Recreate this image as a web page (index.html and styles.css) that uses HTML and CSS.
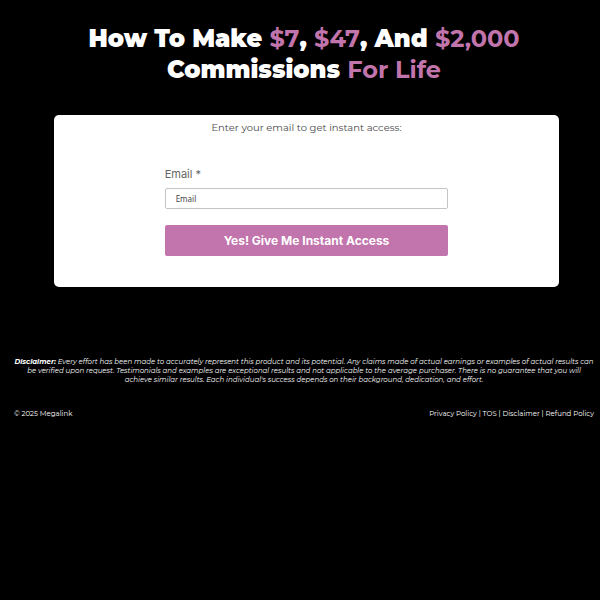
FILE: index.html
```html
<!DOCTYPE html>
<html lang="en">
<head>
  <meta charset="UTF-8">
  <meta name="viewport" content="width=device-width, initial-scale=1.0">
  <title>Megalink</title>
  <link rel="stylesheet" href="styles.css">
</head>
<body>
  <main>
    <h1>How To Make <span class="accent">$7</span>, <span class="accent">$47</span>, And <span class="accent">$2,000</span><br>Commissions <span class="accent">For Life</span></h1>

    <section class="card">
      <p class="intro">Enter your email to get instant access:</p>
      <form class="optin">
        <label for="email">Email *</label>
        <input type="email" id="email" name="email" placeholder="Email" required>
        <button type="submit">Yes! Give Me Instant Access</button>
      </form>
    </section>
  </main>

  <footer>
    <p class="disclaimer"><strong>Disclaimer:</strong> Every effort has been made to accurately represent this product and its potential. Any claims made of actual earnings or examples of actual results can<br>be verified upon request. Testimonials and examples are exceptional results and not applicable to the average purchaser. There is no guarantee that you will<br>achieve similar results. Each individual's success depends on their background, dedication, and effort.</p>
    <div class="bottom">
      <span>© 2025 Megalink</span>
      <nav>
        <a href="#">Privacy Policy</a> | <a href="#">TOS</a> | <a href="#">Disclaimer</a> | <a href="#">Refund Policy</a>
      </nav>
    </div>
  </footer>
</body>
</html>
```
FILE: styles.css
```css
* {
  box-sizing: border-box;
  margin: 0;
  padding: 0;
}
body {
  padding: 23px 6px 20px 14px;
  background-color: #000;
  color: #fff;
  font-family: Montserrat, Inter, sans-serif;
}
h1 {
  font-size: 24px;
  font-weight: 900;
  line-height: 31px;
  text-align: center;
}
.accent {
  color: #c274ac;
  font-weight: 700;
}
.card {
  margin: 30px 35px 0 40px;
  padding: 6px 20px 31px;
  border-radius: 5px;
  background-color: #fff;
  color: #4a4a4a;
}
.intro {
  font-size: 10px;
  line-height: 14px;
  text-align: center;
}
.optin {
  display: flex;
  flex-direction: column;
  width: 61%;
  max-width: 600px;
  margin: 32px auto 0;
  font-family: Inter, sans-serif;
}
.optin label {
  margin-bottom: 7px;
  color: #666;
  font-size: 11px;
  line-height: 14px;
}
.optin input {
  height: 21px;
  padding: 0 10px;
  border: 1px solid #c4c4c4;
  border-radius: 2px;
  background-color: #fff;
  color: #444;
  font-family: "Noto Sans", sans-serif;
  font-size: 8px;
}
.optin input::placeholder {
  color: #444;
}
.optin button {
  height: 31px;
  margin-top: 16px;
  border: none;
  border-radius: 2px;
  background-color: #c274ac;
  color: #fff;
  font-family: Inter, sans-serif;
  font-size: 12px;
  font-weight: 700;
  cursor: pointer;
}
.disclaimer {
  margin-top: 70px;
  font-size: 7px;
  font-style: italic;
  line-height: 9px;
  text-align: center;
}
.bottom {
  display: flex;
  justify-content: space-between;
  margin-top: 25px;
  font-size: 7px;
  line-height: 10px;
}
.bottom a {
  color: #fff;
  text-decoration: none;
}
```
